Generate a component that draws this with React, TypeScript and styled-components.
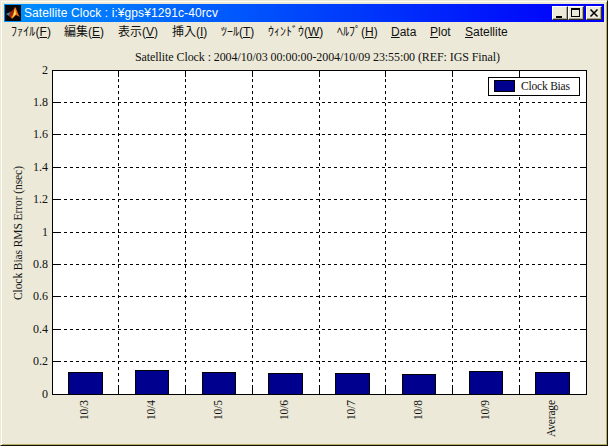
import React from 'react';
import styled, { createGlobalStyle } from 'styled-components';

const Global = createGlobalStyle`
  * { box-sizing: border-box; }
  body { margin: 0; background: #ece9d8; overflow: hidden; }
`;

const Window = styled.main`
  width: 608px;
  height: 446px;
  display: flex;
  flex-direction: column;
  background: #ece9d8;
  border: 1px solid #ece9d8;
  border-right-color: #15140c;
  border-bottom-color: #15140c;
  box-shadow: inset 1px 1px #fffef4, inset -1px -1px #b5ad62;
  padding: 3px;
`;

const TitleBar = styled.header`
  height: 18px;
  flex: none;
  display: flex;
  align-items: center;
  padding: 0 2px 0 1px;
  background: linear-gradient(90deg, #0092ff, #0000fa 96%);
`;

const Title = styled.h1`
  flex: 1;
  margin: 0 0 0 3px;
  color: #fff;
  font: 12px/18px "Liberation Sans", Arial, sans-serif;
  letter-spacing: 0.09px;
  white-space: pre;
`;

const Controls = styled.div`
  display: flex;
`;

const ControlButton = styled.button<{ $gap?: boolean }>`
  width: 16px;
  height: 14px;
  padding: 0;
  margin-left: ${(p) => (p.$gap ? 2 : 0)}px;
  border: 1px solid;
  border-color: #fff #302e22 #302e22 #fff;
  box-shadow: inset -1px -1px #aca899;
  background: #ece9d8;
  display: block;
  svg { display: block; }
`;

const MenuBar = styled.nav`
  height: 20px;
  flex: none;
  display: grid;
  grid-template-columns: 53px 54px 54px 49px 47px 69px 54px 39px 35px 60px;
  padding: 1px 0 0 7px;
`;

const MenuItem = styled.span<{ $spacing?: number }>`
  font: 12px/18px "Liberation Sans", "Noto Sans CJK JP", sans-serif;
  letter-spacing: ${(p) => p.$spacing ?? 0}px;
  white-space: nowrap;
  color: #111;
  height: 18px;
  u {
    text-underline-offset: 1px;
    text-decoration-thickness: 1px;
    text-decoration-skip-ink: none;
  }
`;

const Figure = styled.svg`
  display: block;
  flex: none;
  margin-left: -4px;
`;

const ChartText = styled.text<{ $size?: number }>`
  font-family: "Liberation Serif", "Times New Roman", serif;
  font-size: ${(p) => p.$size ?? 12}px;
  fill: #111;
`;

const menu = [
  { text: 'ﾌｧｲﾙ', key: 'F', spacing: 0.1 },
  { text: '編集', key: 'E', spacing: 0 },
  { text: '表示', key: 'V', spacing: 0 },
  { text: '挿入', key: 'I', spacing: 0 },
  { text: 'ﾂｰﾙ', key: 'T', spacing: 0 },
  { text: 'ｳｨﾝﾄﾞｳ', key: 'W', spacing: 0 },
  { text: 'ﾍﾙﾌﾟ', key: 'H', spacing: 0 },
];

const bars = [
  { label: '10/3', x: 68, w: 34, top: 372 },
  { label: '10/4', x: 135, w: 33, top: 370 },
  { label: '10/5', x: 202, w: 33, top: 372 },
  { label: '10/6', x: 268, w: 34, top: 373 },
  { label: '10/7', x: 335, w: 34, top: 373 },
  { label: '10/8', x: 402, w: 33, top: 374 },
  { label: '10/9', x: 469, w: 33, top: 371 },
  { label: 'Average', x: 535, w: 34, top: 372 },
];

const yTicks = [
  { label: '2', y: 70 }, { label: '1.8', y: 102 }, { label: '1.6', y: 134 },
  { label: '1.4', y: 167 }, { label: '1.2', y: 199 }, { label: '1', y: 232 },
  { label: '0.8', y: 264 }, { label: '0.6', y: 296 }, { label: '0.4', y: 329 },
  { label: '0.2', y: 361 }, { label: '0', y: 394 },
];

const xGrid = [118, 185, 252, 319, 385, 452, 519];

const MatlabIcon = () => (
  <svg width="16" height="16" viewBox="0 0 16 16">
    <rect width="16" height="16" fill="#080808" />
    <path d="M1 9 5 7 7 9 4 11Z" fill="#3f8c9c" />
    <path d="M5 7 8 5 10 2 9 9 6 13 4 11Z" fill="#a32012" />
    <path d="M10 2C12 4 12 8 15 12L11 10 7 14 6 12C9 10 9 5 10 2Z" fill="#f06a18" />
    <path d="M10 3 11 9 7 13C9 10 9 6 10 3Z" fill="#ffe64a" />
  </svg>
);

const Chart = () => (
  <Figure width="608" height="402" viewBox="0 42 608 402" shapeRendering="crispEdges">
    <ChartText x="135" y="61" textLength="365">Satellite Clock : 2004/10/03 00:00:00-2004/10/09 23:55:00 (REF: IGS Final)</ChartText>
    <rect x="52.5" y="70.5" width="534" height="324" fill="#fff" stroke="#000" />
    {yTicks.slice(1, -1).map(({ y }) => (
      <g key={y} stroke="#000">
        <path d={`M52 ${y + 0.5}H586`} strokeDasharray="3 3" />
        <path d={`M53 ${y + 0.5}h7M586 ${y + 0.5}h-6`} />
      </g>
    ))}
    {xGrid.map((x) => (
      <g key={x} stroke="#000">
        <path d={`M${x + 0.5} 394V71`} strokeDasharray="3 3" />
        <path d={`M${x + 0.5} 394v-6M${x + 0.5} 71v6`} />
      </g>
    ))}
    {yTicks.map(({ label, y }) => (
      <ChartText key={y} x="48" y={y + 4} textAnchor="end">{label}</ChartText>
    ))}
    {bars.map(({ label, x, w, top }) => (
      <g key={label}>
        <rect x={x + 0.5} y={top + 0.5} width={w} height={394 - top} fill="#00008f" stroke="#000" />
        <ChartText
          transform={`translate(${x + 20} ${label === 'Average' ? 437 : 420}) rotate(-90)`}
          $size={11.5}
          textLength={label === 'Average' ? 37 : 20}
        >
          {label}
        </ChartText>
      </g>
    ))}
    <ChartText transform="translate(22 300) rotate(-90)" $size={11.5} textLength="134">Clock Bias RMS Error (nsec)</ChartText>
    <rect x="488.5" y="77.5" width="91" height="18" fill="#fff" stroke="#000" />
    <rect x="494.5" y="80.5" width="20" height="11" fill="#00008f" stroke="#000" />
    <ChartText x="521" y="90" $size={11.5} textLength="49">Clock Bias</ChartText>
  </Figure>
);

export default function App() {
  return (
    <>
      <Global />
      <Window>
        <TitleBar>
          <MatlabIcon />
          <Title>Satellite Clock : i:¥gps¥1291c-40rcv</Title>
          <Controls>
            <ControlButton aria-label="Minimize">
              <svg width="14" height="12" shapeRendering="crispEdges"><path d="M3 9h6v2H3z" /></svg>
            </ControlButton>
            <ControlButton aria-label="Maximize">
              <svg width="14" height="12" shapeRendering="crispEdges"><path fillRule="evenodd" d="M2 1h9v9H2zM3 3v6h7V3z" /></svg>
            </ControlButton>
            <ControlButton aria-label="Close" $gap>
              <svg width="14" height="12"><path d="M3.5 2.5l7 7M10.5 2.5l-7 7" stroke="#000" strokeWidth="1.5" /></svg>
            </ControlButton>
          </Controls>
        </TitleBar>
        <MenuBar>
          {menu.map(({ text, key, spacing }) => (
            <MenuItem key={key} $spacing={spacing}>{text}(<u>{key}</u>)</MenuItem>
          ))}
          <MenuItem><u>D</u>ata</MenuItem>
          <MenuItem><u>P</u>lot</MenuItem>
          <MenuItem><u>S</u>atellite</MenuItem>
        </MenuBar>
        <Chart />
      </Window>
    </>
  );
}
